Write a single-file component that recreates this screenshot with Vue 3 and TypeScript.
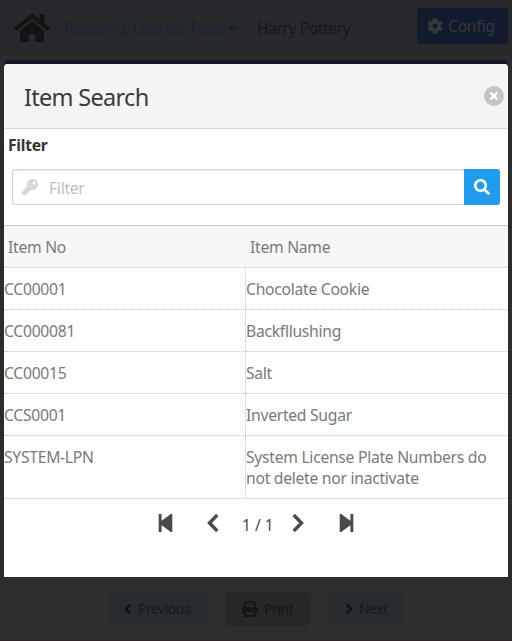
<script setup lang="ts">
import { ref } from 'vue'

interface Item {
  no: string
  name: string
}

const filter = ref<string>('')
const items: Item[] = [
  { no: 'CC00001', name: 'Chocolate Cookie' },
  { no: 'CC000081', name: 'Backfllushing' },
  { no: 'CC00015', name: 'Salt' },
  { no: 'CCS0001', name: 'Inverted Sugar' },
  { no: 'SYSTEM-LPN', name: 'System License Plate Numbers do not delete nor inactivate' },
]
</script>

<template>
  <div class="page">
    <header class="topbar">
      <svg class="home" viewBox="0 0 576 512"><path d="M280.37 148.26L96 300.11V464a16 16 0 0 0 16 16l112.06-.29a16 16 0 0 0 15.92-16V368a16 16 0 0 1 16-16h64a16 16 0 0 1 16 16v95.64a16 16 0 0 0 16 16.05L464 480a16 16 0 0 0 16-16V300L295.67 148.26a12.19 12.19 0 0 0-15.3 0zM571.6 251.47L488 182.56V44.05a12 12 0 0 0-12-12h-56a12 12 0 0 0-12 12v72.61L318.47 43a48 48 0 0 0-61 0L4.34 251.47a12 12 0 0 0-1.6 16.9l25.5 31A12 12 0 0 0 45.15 301l235.22-193.74a12.19 12.19 0 0 1 15.3 0L530.9 301a12 12 0 0 0 16.9-1.6l25.5-31a12 12 0 0 0-1.7-16.93z" /></svg>
      <a class="crumb">Reassing_License_Plate</a>
      <svg class="caret" viewBox="0 0 10 8"><path d="M1.2 1.7 5 5.5 8.8 1.7" /></svg>
      <span class="user">Harry Pottery</span>
      <button class="config">
        <svg viewBox="0 0 512 512"><path d="M487.4 315.7l-42.6-24.6c4.3-23.2 4.3-47 0-70.2l42.6-24.6c4.9-2.8 7.1-8.6 5.5-14-11.1-35.6-30-67.8-54.7-94.6-3.8-4.1-10-5.1-14.8-2.3L380.8 110c-17.9-15.4-38.5-27.3-60.8-35.1V25.8c0-5.6-3.9-10.5-9.4-11.7-36.7-8.2-74.3-7.8-109.2 0-5.5 1.2-9.4 6.1-9.4 11.7V75c-22.2 7.9-42.8 19.8-60.8 35.1L88.7 85.5c-4.9-2.8-11-1.9-14.8 2.3-24.7 26.7-43.6 58.9-54.7 94.6-1.7 5.4.6 11.2 5.5 14L67.3 221c-4.3 23.2-4.3 47 0 70.2l-42.6 24.6c-4.9 2.8-7.1 8.6-5.5 14 11.1 35.6 30 67.8 54.7 94.6 3.8 4.1 10 5.1 14.8 2.3l42.6-24.6c17.9 15.4 38.5 27.3 60.8 35.1v49.2c0 5.6 3.9 10.5 9.4 11.7 36.7 8.2 74.3 7.8 109.2 0 5.5-1.2 9.4-6.1 9.4-11.7v-49.2c22.2-7.9 42.8-19.8 60.8-35.1l42.6 24.6c4.9 2.8 11 1.9 14.8-2.3 24.7-26.7 43.6-58.9 54.7-94.6 1.5-5.5-.7-11.3-5.6-14.1zM256 336c-44.1 0-80-35.9-80-80s35.9-80 80-80 80 35.9 80 80-35.9 80-80 80z" /></svg>
        <span>Config</span>
      </button>
    </header>

    <div class="panel">
      <div class="strip">
        <section class="dialog">
          <div class="title">
            <h1>Item Search</h1>
            <svg class="close" viewBox="0 0 20 20"><circle cx="10" cy="10" r="10" /><path d="M6.4 6.6 13.2 13.4M13.2 6.6 6.4 13.4" /></svg>
          </div>
          <div class="filter">
            <label for="filter">Filter</label>
            <div class="search">
              <div class="field">
                <svg viewBox="0 0 512 512"><path d="M512 176.001C512 273.203 433.202 352 336 352c-11.22 0-22.19-1.062-32.827-3.069l-24.012 27.014A23.999 23.999 0 0 1 261.223 384H224v40c0 13.255-10.745 24-24 24h-40v40c0 13.255-10.745 24-24 24H24c-13.255 0-24-10.745-24-24v-78.059c0-6.365 2.529-12.47 7.029-16.971l161.802-161.802C163.108 213.814 160 195.271 160 176 160 78.798 238.797.001 335.999 0 433.488-.001 512 78.511 512 176.001zM336 128c0 26.51 21.49 48 48 48s48-21.49 48-48-21.49-48-48-48-48 21.49-48 48z" /></svg>
                <input id="filter" v-model="filter" placeholder="Filter" />
              </div>
              <button class="go" aria-label="Search">
                <svg viewBox="0 0 512 512"><path d="M505 442.7L405.3 343c-4.5-4.5-10.6-7-17-7H372c27.6-35.3 44-79.7 44-128C416 93.1 322.9 0 208 0S0 93.1 0 208s93.1 208 208 208c48.3 0 92.7-16.4 128-44v16.3c0 6.4 2.5 12.5 7 17l99.7 99.7c9.4 9.4 24.6 9.4 33.9 0l28.3-28.3c9.4-9.4 9.4-24.6.1-34zM208 336c-70.7 0-128-57.2-128-128 0-70.7 57.2-128 128-128 70.7 0 128 57.2 128 128 0 70.7-57.2 128-128 128z" /></svg>
              </button>
            </div>
          </div>
          <div class="grid">
            <div class="row head"><span>Item No</span><span>Item Name</span></div>
            <div v-for="item in items" :key="item.no" class="row">
              <span class="code">{{ item.no }}</span><span>{{ item.name }}</span>
            </div>
          </div>
          <nav class="pager">
            <svg viewBox="0 0 15 20"><path class="solid" d="M.7 1h2.9v6.800L12.800 1h1.500v18h-1.500L3.600 12.200V19H.7z" /></svg>
            <svg class="prev" viewBox="0 0 12 20"><path class="line" d="M10.3 2 2.5 10l7.8 8" /></svg>
            <span>1 / 1</span>
            <svg class="next" viewBox="0 0 12 20"><path class="line" d="M1.7 2 9.5 10l-7.8 8" /></svg>
            <svg viewBox="0 0 15 20"><path class="solid" d="M14.300 1h-2.900v6.800L2.200 1H.7v18h1.500l9.200-6.800V19h2.900z" /></svg>
          </nav>
        </section>
      </div>
      <footer class="actions">
        <button class="step back"><svg class="chev" viewBox="0 0 8 12"><path d="M6.3 1.5 2 6l4.3 4.5" /></svg><span>Previous</span></button>
        <button class="step print">
          <svg class="printer" viewBox="0 0 16 16"><path fill-rule="evenodd" d="M2 6V1.5Q2 0 3.5 0H12l2 2v4q2 .2 2 2v4.5h-2V16H2v-3.5H0V8Q0 6.2 2 6zM4 2v4h8V3.5h-1.5V2zM4 11v3h8v-3z" /></svg>
          <span>Print</span>
        </button>
        <button class="step forward"><svg class="chev" viewBox="0 0 8 12"><path d="M1.7 1.5 6 6l-4.3 4.5" /></svg><span>Next</span></button>
      </footer>
    </div>
  </div>
</template>

<style>
body {
  background: #28292d;
}
</style>

<style scoped>
* {
  box-sizing: border-box;
}
.page {
  width: 512px;
  height: 641px;
  overflow: hidden;
  font-family: "Noto Sans", "Open Sans", sans-serif;
  font-size: 15.7px;
  letter-spacing: -0.28px;
  color: #7a7a7a;
}
svg {
  display: block;
  flex: none;
}
button {
  border: 0;
  font: inherit;
  letter-spacing: inherit;
  display: flex;
  align-items: center;
}
.topbar {
  height: 56px;
  display: flex;
  align-items: center;
  padding: 0 4px 0 14px;
  background: #28292d;
}
.home {
  width: 36px;
  height: 32px;
  fill: #131313;
}
.crumb {
  margin-left: 14px;
  width: 161px;
  color: #15242f;
  white-space: nowrap;
  letter-spacing: -0.48px;
}
.caret {
  width: 10px;
  height: 8px;
  margin-left: 3px;
}
.caret path {
  fill: none;
  stroke: #15242f;
  stroke-width: 3;
}
.user {
  margin-left: 19px;
  color: #151617;
  white-space: nowrap;
  letter-spacing: -0.45px;
}
.config {
  width: 91px;
  height: 36px;
  margin: -4px 0 0 auto;
  padding: 0 0 0 10px;
  gap: 5px;
  border-radius: 3px;
  background: #121b2d;
  color: #36383a;
}
.config svg {
  width: 16px;
  height: 16px;
  fill: #38393a;
}
.panel {
  height: 585px;
  padding: 4px 4px 0;
  border-radius: 6px 6px 0 0;
  background: #2d2c2b;
  border-bottom: 1px solid #302629;
}
.strip {
  padding-top: 4px;
  border-radius: 4px 4px 0 0;
  background: #111a2b;
}
.dialog {
  height: 513px;
  border-radius: 4px 4px 0 0;
  background: #fff;
  overflow: hidden;
}
.title {
  height: 65px;
  display: flex;
  align-items: center;
  justify-content: space-between;
  padding: 0 4px 0 20px;
  background: #f4f4f4;
  border-bottom: 1px solid #dadada;
}
h1 {
  margin: 1px 0 0;
  font-size: 23.5px;
  font-weight: 400;
  letter-spacing: -0.7px;
  color: #3a3a3a;
}
.close {
  width: 20px;
  height: 20px;
}
.close circle {
  fill: #c4c4c4;
}
.close path {
  stroke: #fff;
  stroke-width: 2.4;
}
.filter {
  height: 96px;
  padding: 4px 8px 0;
}
label {
  display: block;
  height: 24px;
  margin-left: -4px;
  line-height: 24px;
  font-weight: 700;
  color: #363636;
}
.search {
  display: flex;
  height: 36px;
  margin-top: 12px;
}
.field {
  flex: 1;
  display: flex;
  align-items: center;
  padding-left: 9px;
  border: 1px solid #d5d5d5;
  border-right: 0;
  border-radius: 3px 0 0 3px;
  box-shadow: inset 0 1px 2px #e6e6e6;
}
.field svg {
  width: 16px;
  height: 16px;
  fill: #d8d8d8;
}
input {
  flex: 1;
  min-width: 0;
  margin-left: 11px;
  padding: 2px 0 0;
  border: 0;
  outline: 0;
  background: transparent;
  font: inherit;
  letter-spacing: inherit;
  color: #555;
}
input::placeholder {
  color: #c0c0c0;
  opacity: 1;
}
.go {
  width: 36px;
  padding: 0;
  justify-content: center;
  border-radius: 0 3px 3px 0;
  background: #209cee;
}
.go svg {
  width: 16px;
  height: 16px;
  fill: #fff;
}
.grid {
  border-top: 1px solid #c8c8c8;
}
.row {
  display: grid;
  grid-template-columns: 242px 1fr;
  border-bottom: 1px dotted #c4c4c4;
  line-height: 21px;
}
.row span {
  padding: 11px 10px 9px 0;
}
.row .code {
  border-right: 1px dotted #c4c4c4;
}
.row:nth-child(odd):not(.head) {
  background: #fbfdff;
}
.row.head {
  background: #f7f7f7;
  border-bottom: 1px solid #dedede;
}
.row.head span {
  padding-left: 4px;
}
.pager {
  display: flex;
  align-items: center;
  height: 48px;
  padding-left: 154px;
  color: #4a4a4a;
}
.pager svg {
  width: 15px;
  height: 20px;
}
.pager svg.prev {
  width: 12px;
  margin: 0 23px 0 34px;
}
.pager svg.next {
  width: 12px;
  margin: 0 35px 0 18px;
}
.pager span {
  width: 32px;
  padding-top: 4px;
  font-size: 15.5px;
  letter-spacing: 0;
  white-space: nowrap;
}
.solid {
  fill: #4a4a4a;
}
.line {
  fill: none;
  stroke: #4a4a4a;
  stroke-width: 3.4;
}
.actions {
  display: flex;
  gap: 20px;
  height: 63px;
  margin: 0 -4px;
  padding: 14px 0 0 108px;
  background: #2d2d2d;
}
.step {
  height: 35px;
  padding: 0 0 0 16px;
  gap: 6px;
  border-radius: 4px;
  background: #272d2f;
  color: #141819;
  font-size: 14px;
  letter-spacing: -0.5px;
}
.back {
  width: 98px;
}
.print {
  width: 83px;
  background: #272727;
  color: #141414;
}
.forward {
  width: 75px;
}
.chev {
  width: 8px;
  height: 12px;
}
.chev path {
  fill: none;
  stroke: #111;
  stroke-width: 2.5;
}
.printer {
  width: 16px;
  height: 16px;
  fill: #151515;
}
</style>
